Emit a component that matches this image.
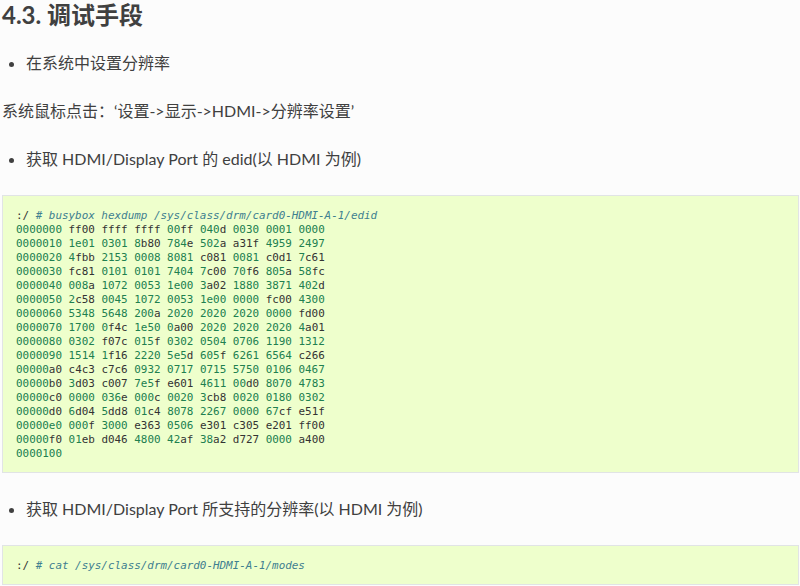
const dump = `0000000 ff00 ffff ffff 00ff 040d 0030 0001 0000
0000010 1e01 0301 8b80 784e 502a a31f 4959 2497
0000020 4fbb 2153 0008 8081 c081 0081 c0d1 7c61
0000030 fc81 0101 0101 7404 7c00 70f6 805a 58fc
0000040 008a 1072 0053 1e00 3a02 1880 3871 402d
0000050 2c58 0045 1072 0053 1e00 0000 fc00 4300
0000060 5348 5648 200a 2020 2020 2020 0000 fd00
0000070 1700 0f4c 1e50 0a00 2020 2020 2020 4a01
0000080 0302 f07c 015f 0302 0504 0706 1190 1312
0000090 1514 1f16 2220 5e5d 605f 6261 6564 c266
00000a0 c4c3 c7c6 0932 0717 0715 5750 0106 0467
00000b0 3d03 c007 7e5f e601 4611 00d0 8070 4783
00000c0 0000 036e 000c 0020 3cb8 0020 0180 0302
00000d0 6d04 5dd8 01c4 8078 2267 0000 67cf e51f
00000e0 000f 3000 e363 0506 e301 c305 e201 ff00
00000f0 01eb d046 4800 42af 38a2 d727 0000 a400
0000100`;

// leading number (or 1e01 style float) is green, the rest stays plain
function Word({ w }: { w: string }) {
  const m = w.match(/^(\d+(?:e\d+)?)(.*)$/);
  if (!m) return <span>{w}</span>;
  return (
    <>
      <span className="text-[#208050]">{m[1]}</span>
      {m[2]}
    </>
  );
}

function Prompt({ cmd }: { cmd: string }) {
  return (
    <>
      <span>:/ </span>
      <span className="italic text-[#408090]">{cmd}</span>
    </>
  );
}

function Bullet({ children }: { children: React.ReactNode }) {
  return (
    <ul className="list-disc pl-[24px]">
      <li>{children}</li>
    </ul>
  );
}

export default function App() {
  return (
    <div className="h-[586px] overflow-hidden bg-[#fcfcfc] pl-[2px] pr-[1px] font-['Lato','Noto_Sans_CJK_SC',sans-serif] text-[16px] leading-[24px] text-[#404040]">
      <h3 className="mb-[21px] text-[24px] leading-[30px] font-bold">4.3. 调试手段</h3>
      <Bullet>在系统中设置分辨率</Bullet>
      <p className="mt-[24px] mb-[24px]">系统鼠标点击：‘设置-&gt;显示-&gt;HDMI-&gt;分辨率设置’</p>
      <Bullet>获取 HDMI/Display Port 的 edid(以 HDMI 为例)</Bullet>
      <pre className="mt-[24px] border border-[#e1e4e5] bg-[#eeffcc] pt-[13px] pb-[11px] px-[13px] font-['DejaVu_Sans_Mono',monospace] text-[10.92px] leading-[14px] text-[#333333]">
        <Prompt cmd="# busybox hexdump /sys/class/drm/card0-HDMI-A-1/edid" />
        {"\n"}
        {dump.split("\n").map((line, i) => (
          <span key={i}>
            {line.split(" ").map((w, j) => (
              <span key={j}>
                {j > 0 && " "}
                <Word w={w} />
              </span>
            ))}
            {"\n"}
          </span>
        ))}
      </pre>
      <div className="mt-[24px]">
        <Bullet>获取 HDMI/Display Port 所支持的分辨率(以 HDMI 为例)</Bullet>
      </div>
      <pre className="mt-[24px] border border-[#e1e4e5] bg-[#eeffcc] pt-[13px] pb-[11px] px-[13px] font-['DejaVu_Sans_Mono',monospace] text-[10.92px] leading-[14px] text-[#333333]">
        <Prompt cmd="# cat /sys/class/drm/card0-HDMI-A-1/modes" />
      </pre>
    </div>
  );
}
